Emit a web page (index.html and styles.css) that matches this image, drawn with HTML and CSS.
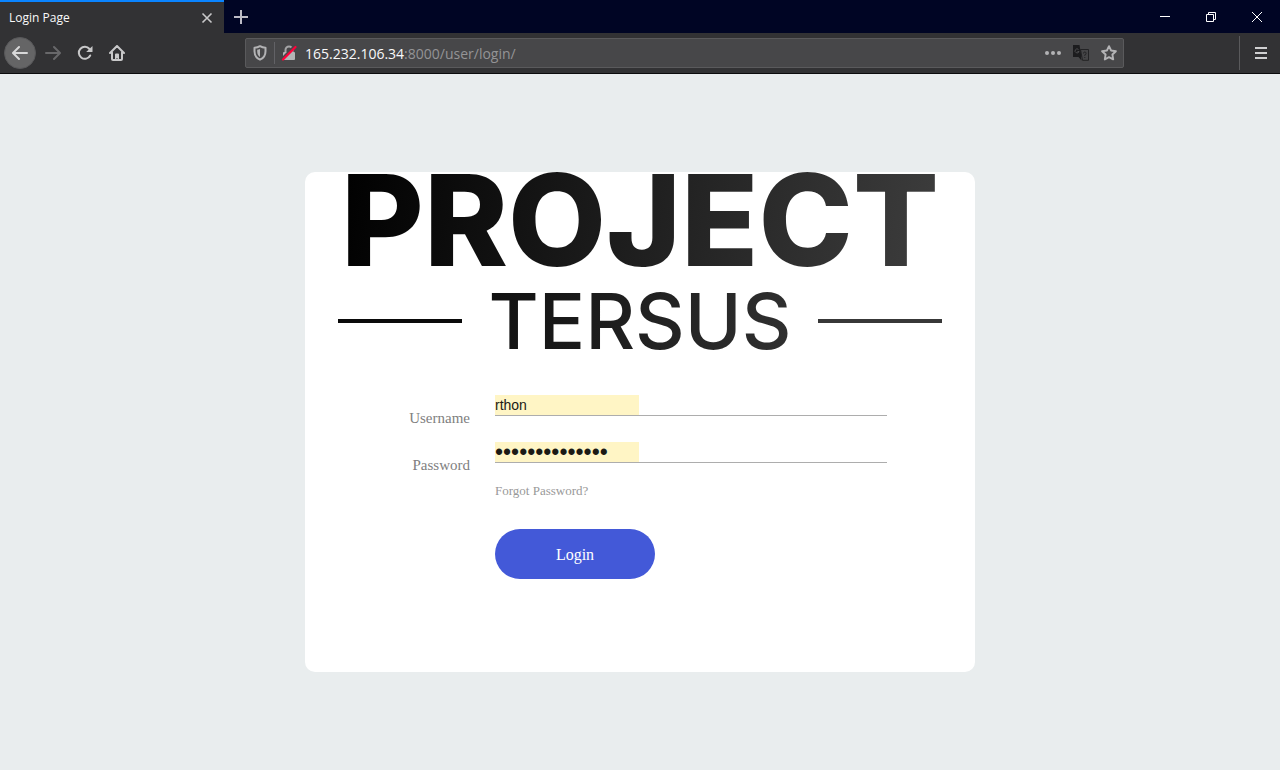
FILE: index.html
```html
<!DOCTYPE html>
<html lang="en">
<head>
<meta charset="utf-8">
<meta name="viewport" content="width=device-width, initial-scale=1">
<title>Login Page</title>
<link rel="stylesheet" href="styles.css">
</head>
<body>
<header class="browser">
  <div class="titlebar">
    <div class="tab">
      <span class="tab-title">Login Page</span>
      <button class="icon-btn tab-close" aria-label="Close tab">
        <svg width="12" height="12" viewBox="0 0 12 12"><path d="M1.5 1.5l9 9M10.5 1.5l-9 9" stroke="#c8c8c9" stroke-width="1.6" fill="none"/></svg>
      </button>
    </div>
    <button class="icon-btn new-tab" aria-label="New tab">
      <svg width="14" height="14" viewBox="0 0 14 14"><path d="M7 0v14M0 7h14" stroke="#bcbcc6" stroke-width="2" fill="none"/></svg>
    </button>
    <div class="window-controls">
      <button class="icon-btn" aria-label="Minimize"><svg width="10" height="10" viewBox="0 0 10 10"><path d="M0 4.5h10" stroke="#fff"/></svg></button>
      <button class="icon-btn" aria-label="Restore"><svg width="10" height="10" viewBox="0 0 10 10" fill="none" stroke="#fff"><path d="M.5 2.500h7v7h-7zM2.500 2.500v-2h7v7h-2"/></svg></button>
      <button class="icon-btn" aria-label="Close window"><svg width="10" height="10" viewBox="0 0 10 10"><path d="M0 0l10 10M10 0L0 10" stroke="#fff"/></svg></button>
    </div>
  </div>
  <div class="toolbar">
    <nav class="nav" aria-label="Browser navigation">
      <button class="icon-btn back" aria-label="Back"><svg width="16" height="16" viewBox="0 0 16 16" fill="none" stroke="#d8d8d9" stroke-width="2" stroke-linecap="round" stroke-linejoin="round"><path d="M15 8H1.500M7 2L1 8l6 6"/></svg></button>
      <button class="icon-btn" aria-label="Forward"><svg width="16" height="16" viewBox="0 0 16 16" fill="none" stroke="#68686a" stroke-width="2" stroke-linecap="round" stroke-linejoin="round"><path d="M1 8h13.500M9 2l6 6-6 6"/></svg></button>
      <button class="icon-btn" aria-label="Reload"><svg width="16" height="16" viewBox="0 0 16 16"><path d="M13.200 10.500A6 6 0 1 1 12.500 4" fill="none" stroke="#c8c8c9" stroke-width="2" stroke-linecap="round"/><path d="M15.500 1v5.500a.5.5 0 0 1-.5.5H9.200z" fill="#c8c8c9"/></svg></button>
      <button class="icon-btn" aria-label="Home"><svg width="16" height="16" viewBox="0 0 16 16"><path d="M1 8l7-7 7 7M3 7.500v6.500q0 1 1 1h8q1 0 1-1V7.500" fill="none" stroke="#c8c8c9" stroke-width="2" stroke-linecap="round" stroke-linejoin="round"/><path d="M6 15V9.500q0-1 1-1h2q1 0 1 1V15H8.500v-2h-1v2z" fill="#c8c8c9"/></svg></button>
    </nav>
    <div class="urlbar">
      <svg class="shield" width="14" height="16" viewBox="0 0 14 16"><path d="M7 1.200c1.600 1 3.500 1.500 5.500 1.500v3.500c0 4-2 7-5.500 8.500-3.500-1.500-5.500-4.500-5.500-8.500V2.700c2 0 3.900-.5 5.500-1.500z" fill="none" stroke="#b3b3b5" stroke-width="2" stroke-linejoin="round"/><path d="M7 4v8c-1.800-1.200-2.800-3-2.800-5.500V4.700C5.200 4.600 6.100 4.400 7 4z" fill="#b3b3b5"/></svg>
      <span class="divider"></span>
      <svg class="lock" width="16" height="16" viewBox="0 0 16 16"><path d="M4.500 8V5a3.500 3.500 0 0 1 7 0v3" fill="none" stroke="#a5a5a7" stroke-width="2"/><rect x="2" y="7" width="12" height="8" rx="1" fill="#b3b3b5"/><path d="M1 14L14 1" stroke="#474749" stroke-width="3"/><path d="M2 14.500L14.500 2" stroke="#ff0039" stroke-width="2.200" stroke-linecap="round"/></svg>
      <div class="url" role="textbox" aria-label="Address" contenteditable="true" spellcheck="false"><span class="host">165.232.106.34</span>:8000/user/login/</div>
      <div class="url-actions">
        <button class="icon-btn" aria-label="Page actions"><svg width="16" height="16" viewBox="0 0 16 16" fill="#b3b3b5"><circle cx="2" cy="8" r="2"/><circle cx="8" cy="8" r="2"/><circle cx="14" cy="8" r="2"/></svg></button>
        <button class="icon-btn" aria-label="Translate"><svg width="16" height="16" viewBox="0 0 16 16"><path d="M7.500 4.500h8v10.800h-6z" fill="#454547" stroke="#232325"/><path d="M0 0h6.500l2 12H0z" fill="#1c1c1e"/><path d="M5.500 4.500A2 2 0 1 0 6 6.500H4.500" fill="none" stroke="#4c4c4e"/><path d="M8 12l-2.500 0 3 3.500z" fill="#1c1c1e"/><path d="M10.500 8.500q0-1.500 1.300-1.500t1.300 1.300-1.300 1.500v1M11.800 12v1" fill="none" stroke="#232325"/></svg></button>
        <button class="icon-btn" aria-label="Bookmark this page"><svg width="16" height="16" viewBox="0 0 16 16" fill="none" stroke="#b3b3b5" stroke-width="1.900" stroke-linejoin="round"><path d="M8 1.200l2.100 4.300 4.800.7-3.500 3.300.8 4.900L8 12.100l-4.200 2.300.8-4.900L1.100 6.200l4.800-.7z"/></svg></button>
      </div>
    </div>
    <div class="menu">
      <button class="icon-btn" aria-label="Open menu"><svg width="12" height="12" viewBox="0 0 12 12"><path d="M0 1h12M0 6h12M0 11h12" stroke="#d0d0d1" stroke-width="2"/></svg></button>
    </div>
  </div>
</header>
<main class="page">
  <section class="card">
    <h1 class="logo">
      <span class="logo-main">PROJECT</span>
      <span class="logo-sub">TERSUS</span>
    </h1>
    <form class="form">
      <label class="label" for="username">Username</label>
      <div class="field"><input class="input" id="username" type="text" value="rthon"></div>
      <label class="label" for="password">Password</label>
      <div class="field"><input class="input password" id="password" type="password" value="password123456"></div>
      <a class="forgot" href="#">Forgot Password?</a>
      <button class="login" type="submit">Login</button>
    </form>
  </section>
</main>
</body>
</html>
```
FILE: styles.css
```css
* { box-sizing: border-box; }

body {
  margin: 0;
  min-height: 100vh;
  display: flex;
  flex-direction: column;
  background: #e9edee;
  font-family: "Liberation Serif", "Times New Roman", serif;
}

button { font: inherit; cursor: pointer; }

.icon-btn {
  display: flex;
  align-items: center;
  justify-content: center;
  padding: 0;
  border: 0;
  background: none;
}

.browser { font-family: "Open Sans", "Noto Sans", sans-serif; }

.titlebar {
  display: flex;
  height: 33px;
  background: #000524;
}

.tab {
  display: flex;
  align-items: center;
  justify-content: space-between;
  width: 224px;
  padding: 0 11px 0 9px;
  border-top: 2px solid #0a84ff;
  background: #323234;
}

.tab-title { color: #f9f9fa; font-size: 12px; }

.new-tab { width: 34px; }

.window-controls { display: flex; margin-left: auto; }
.window-controls .icon-btn { width: 46px; }

.toolbar {
  display: flex;
  align-items: center;
  height: 41px;
  background: #323234;
  border-bottom: 1px solid #0c0c0d;
}

.nav { display: flex; align-items: center; padding-left: 4px; }
.nav .icon-btn { width: 32px; height: 32px; }
.nav .back { margin-right: 1px; border: 1px solid #58585a; border-radius: 50%; background: #656566; }

.urlbar {
  flex: 1;
  display: flex;
  align-items: center;
  height: 30px;
  margin: 0 115px 0 112px;
  padding: 0 6px 0 7px;
  border: 1px solid #5a5a5c;
  border-radius: 2px;
  background: #474749;
}

.divider { width: 1px; height: 22px; margin: 0 6px 0 7px; background: #626266; }

.url {
  flex: 1;
  margin-left: 8px;
  color: #949496;
  font-size: 14px;
  white-space: nowrap;
  outline: 0;
}

.host { color: #f9f9fa; }

.url-actions { display: flex; gap: 12px; }

.menu {
  display: flex;
  justify-content: center;
  width: 41px;
  height: 34px;
  padding-left: 2px;
  border-left: 1px solid #5a5a5c;
}

.page {
  flex: 1;
  display: flex;
  align-items: center;
  justify-content: center;
}

.card {
  width: 100%;
  max-width: 670px;
  min-height: 500px;
  border-radius: 10px;
  background: #fff;
}

.logo {
  display: flex;
  flex-direction: column;
  align-items: center;
  margin: 0 33px;
  font-family: Inter, "Open Sans", sans-serif;
  color: transparent;
  background: linear-gradient(100deg, #000, #3f3f3f);
  background-clip: text;
  -webkit-background-clip: text;
}

.logo-main { font-size: 127px; font-weight: 800; line-height: 97px; }

.logo-sub {
  display: flex;
  align-items: center;
  justify-content: space-between;
  width: 100%;
  padding-top: 8px;
  font-size: 77px;
  font-weight: 500;
  line-height: 88px;
}

.logo-sub::before,
.logo-sub::after {
  content: "";
  width: 124px;
  height: 4px;
  background: #0a0a0a;
}

.logo-sub::after { background: #383838; }

.form {
  display: grid;
  grid-template-columns: 165px minmax(0, 392px);
  column-gap: 25px;
  padding: 30px 88px 93px 0;
}

.label {
  padding-top: 15px;
  text-align: right;
  font-size: 15px;
  line-height: 17px;
  color: #808080;
}

.field {
  height: 21px;
  margin-bottom: 26px;
  border-bottom: 1px solid #adadad;
}

.input {
  display: block;
  width: 144px;
  height: 20px;
  padding: 0;
  border: 0;
  outline: 0;
  background: #fff5c5;
  color: #1b1a15;
  font-family: "Liberation Sans", Arial, sans-serif;
  font-size: 14px;
}

.password { font-size: 23px; }

.forgot {
  grid-column: 2;
  justify-self: start;
  margin-top: -6px;
  font-size: 13px;
  line-height: 16px;
  color: #999;
  text-decoration: none;
}

.login {
  grid-column: 2;
  width: 160px;
  height: 50px;
  margin-top: 30px;
  padding: 2px 0 0;
  border: 0;
  border-radius: 25px;
  background: #4359d8;
  color: #fff;
  font-size: 16px;
}
```
